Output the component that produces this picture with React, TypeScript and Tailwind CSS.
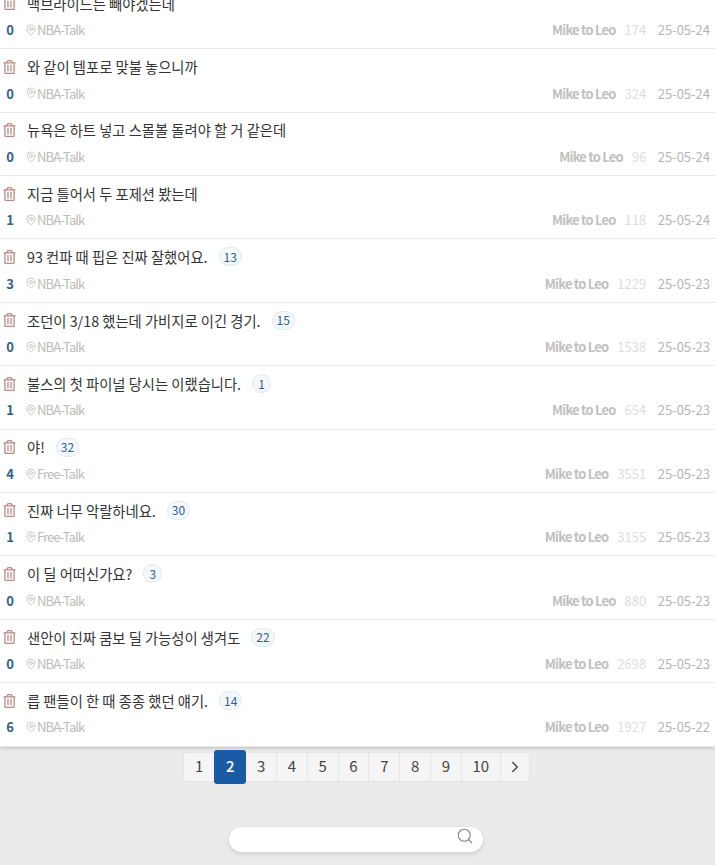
import React from 'react';
import { MapPin, Search, ChevronRight } from 'lucide-react';
import { FaRegTrashAlt } from 'react-icons/fa';

type Post = { title: string; comments?: number; votes: number; board: string; views: number; date: string };

const posts: Post[] = [
    { title: '맥브라이드는 빼야겠는데', votes: 0, board: 'NBA-Talk', views: 174, date: '25-05-24' },
    { title: '와 같이 템포로 맞불 놓으니까', votes: 0, board: 'NBA-Talk', views: 324, date: '25-05-24' },
    { title: '뉴욕은 하트 넣고 스몰볼 돌려야 할 거 같은데', votes: 0, board: 'NBA-Talk', views: 96, date: '25-05-24' },
    { title: '지금 틀어서 두 포제션 봤는데', votes: 1, board: 'NBA-Talk', views: 118, date: '25-05-24' },
    { title: '93 컨파 때 핍은 진짜 잘했어요.', comments: 13, votes: 3, board: 'NBA-Talk', views: 1229, date: '25-05-23' },
    { title: '조던이 3/18 했는데 가비지로 이긴 경기.', comments: 15, votes: 0, board: 'NBA-Talk', views: 1538, date: '25-05-23' },
    { title: '불스의 첫 파이널 당시는 이랬습니다.', comments: 1, votes: 1, board: 'NBA-Talk', views: 654, date: '25-05-23' },
    { title: '야!', comments: 32, votes: 4, board: 'Free-Talk', views: 3551, date: '25-05-23' },
    { title: '진짜 너무 악랄하네요.', comments: 30, votes: 1, board: 'Free-Talk', views: 3155, date: '25-05-23' },
    { title: '이 딜 어떠신가요?', comments: 3, votes: 0, board: 'NBA-Talk', views: 880, date: '25-05-23' },
    { title: '샌안이 진짜 쿰보 딜 가능성이 생겨도', comments: 22, votes: 0, board: 'NBA-Talk', views: 2698, date: '25-05-23' },
    { title: '릅 팬들이 한 때 종종 했던 얘기.', comments: 14, votes: 6, board: 'NBA-Talk', views: 1927, date: '25-05-22' },
];

const pages = ['1', '2', '3', '4', '5', '6', '7', '8', '9', '10'];

const App: React.FC = () => {
    return (
        <div className="h-[865px] overflow-hidden bg-[#ebebeb] font-['Noto_Sans_CJK_KR','Noto_Sans',sans-serif]">
            <div className="-mt-[14.15px] bg-white shadow-[0_1px_4px_rgba(0,0,0,0.2)]">
                {posts.map(post => (
                    <div key={post.title} className="h-[63.4px] border-b border-[#e8e8e8] pl-[3px] pr-[5px]">
                        <div className="flex h-[35px] items-center">
                            <FaRegTrashAlt className="h-[14px] w-[13px] text-[#b98a8a]" />
                            <span className="ml-[11px] text-[14.3px] text-[#333]">{post.title}</span>
                            {post.comments !== undefined && (
                                <span className="ml-[11px] flex h-[19px] min-w-[19px] items-center justify-center rounded-full border border-[#e0e8f0] bg-[#f5f8fb] px-[4px] text-[12px] text-[#2f5f8a]">
                                    {post.comments}
                                </span>
                            )}
                        </div>
                        <div className="flex h-[18px] items-center text-[13px]">
                            <span className="w-[14px] text-center font-bold text-[#2f5f8a]">{post.votes}</span>
                            <MapPin className="ml-[8px] h-[12px] w-[12px] text-[#b5b5b5]" strokeWidth={1.5} />
                            <span className="tracking-[-0.9px] text-[#bbb]">{post.board}</span>
                            <span className="ml-auto font-bold tracking-[-0.8px] text-[#c0c0c0]">Mike to Leo</span>
                            <span className="ml-[9px] text-[#ddd]">{post.views}</span>
                            <span className="ml-[11.5px] text-[#b5b5b5]">{post.date}</span>
                        </div>
                    </div>
                ))}
            </div>
            <div className="mt-[5px] flex justify-center pr-[2px]">
                <div className="flex h-[30px] items-center rounded-[2px] border border-[#e5e5e5] bg-[#f5f5f5] text-[15px] text-[#444]">
                    {pages.map(page => page === '2' ? (
                        <span key={page} className="z-10 flex h-[34px] w-[32px] items-center justify-center rounded-[3px] bg-[#1a5ba6] font-medium text-white">{page}</span>
                    ) : page === '1' ? (
                        <span key={page} className="flex h-full w-[30px] items-center justify-center">{page}</span>
                    ) : (
                        <span key={page} className={`flex h-full items-center justify-center border-r border-[#e5e5e5] ${page === '10' ? 'w-[39px]' : 'w-[30.8px]'}`}>{page}</span>
                    ))}
                    <span className="flex h-full w-[28px] items-center justify-center">
                        <ChevronRight className="h-[18px] w-[18px]" strokeWidth={1.8} />
                    </span>
                </div>
            </div>
            <div className="mt-[45px] flex justify-center pr-[4px]">
                <div className="flex h-[25px] w-[254px] items-center justify-end rounded-full bg-white pr-[9px] shadow-[0_2px_5px_rgba(0,0,0,0.12)]">
                    <Search className="-mt-[7px] h-[18px] w-[18px] text-[#888]" strokeWidth={1.5} />
                </div>
            </div>
        </div>
    );
};

export default App;
